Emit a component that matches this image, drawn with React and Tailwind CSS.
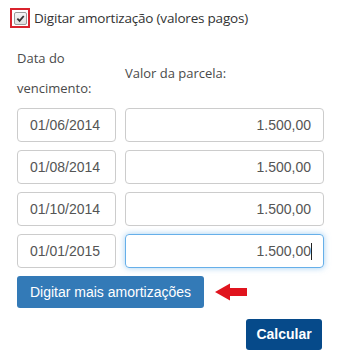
import React from 'react';

const rows = [
  { date: '01/06/2014', value: '1.500,00' },
  { date: '01/08/2014', value: '1.500,00' },
  { date: '01/10/2014', value: '1.500,00' },
  { date: '01/01/2015', value: '1.500,00', focused: true },
];

const App = () => {
  return (
    <div className="w-[345px] h-[357px] bg-white pl-[17px] pt-[8px] font-['Open_Sans',sans-serif] text-[#333]">
      {/* checkbox header */}
      <div className="flex items-center -ml-[7px] h-[20px]">
        <div className="w-[20px] h-[20px] border-2 border-[#d9232d] flex items-center justify-center">
          <div className="w-[13px] h-[13px] border border-[#9a9a9a] rounded-[2px] bg-gradient-to-b from-[#f6f6f6] to-[#dedede] flex items-center justify-center">
            <svg width="9" height="9" viewBox="0 0 10 10">
              <path d="M1.5 5.2 L4 7.6 L8.6 2.2" fill="none" stroke="#333" strokeWidth="2" />
            </svg>
          </div>
        </div>
        <span className="ml-[4px] text-[13.5px] leading-[20px] tracking-[-0.2px]">Digitar amortização (valores pagos)</span>
      </div>

      {/* labels */}
      <div className="flex mt-[15px] text-[13px] text-[#4a4a4a] leading-[30px]">
        <div className="w-[99px]">
          <div>Data do</div>
          <div>vencimento:</div>
        </div>
        <div className="ml-[9px] flex items-center">Valor da parcela:</div>
      </div>

      {/* rows */}
      <div className="flex flex-col gap-[8px] mt-[5px] font-['Liberation_Sans',Arial,sans-serif] text-[14px] text-[#555]">
        {rows.map((row, i) => (
          <div key={i} className="flex gap-[9px]">
            <div className="w-[99px] h-[34px] border border-[#ccc] rounded-[4px] flex items-center pl-[12px]">
              {row.date}
            </div>
            <div
              className={
                row.focused
                  ? 'w-[199px] h-[34px] border border-[#66afe9] rounded-[4px] flex items-center justify-end pr-[11px] shadow-[0_0_6px_rgba(102,175,233,0.6)]'
                  : 'w-[199px] h-[34px] border border-[#ccc] rounded-[4px] flex items-center justify-end pr-[12px]'
              }
            >
              {row.value}
              {row.focused && <span className="w-px h-[17px] bg-[#222]"></span>}
            </div>
          </div>
        ))}
      </div>

      {/* more button */}
      <div className="flex items-center mt-[8px]">
        <button className="h-[32px] w-[187px] bg-[#337ab7] text-white rounded-[3px] font-['Liberation_Sans',Arial,sans-serif] text-[14px]">
          Digitar mais amortizações
        </button>
        <svg className="ml-[11px]" width="33" height="18" viewBox="0 0 33 18">
          <path d="M0 9 L15 0.5 L15 5 L32 5 L32 13 L15 13 L15 17.5 Z" fill="#e0141e" />
        </svg>
      </div>

      {/* calcular */}
      <div className="flex w-[305px] justify-end mt-[11px]">
        <button className="h-[31px] w-[76px] bg-[#064a8a] text-white rounded-[3px] font-['Liberation_Sans',Arial,sans-serif] font-bold text-[14px]">
          Calcular
        </button>
      </div>
    </div>
  );
};

export default App;
